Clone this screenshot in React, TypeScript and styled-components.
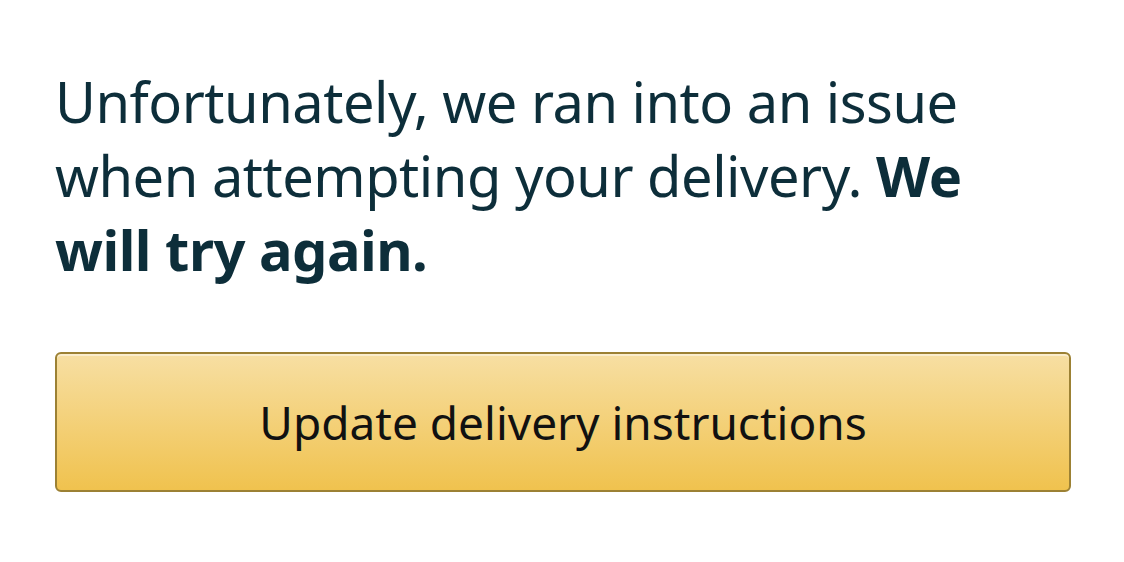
import React from "react";
import styled, { createGlobalStyle } from "styled-components";

const Global = createGlobalStyle`
  html, body { margin: 0; padding: 0; background: #ffffff; }
  body { font-family: "Noto Sans", "Open Sans", sans-serif; }
`;

const Page = styled.main`
  width: 1124px;
  height: 562px;
  box-sizing: border-box;
  padding: 64px 54px 0 55px;
  display: flex;
  flex-direction: column;
  gap: 66px;
  background: #ffffff;
`;

const Message = styled.p`
  margin: 0;
  font-size: 56px;
  line-height: 74px;
  letter-spacing: -0.5px;
  color: #0d2e3a;
  font-weight: 400;
  max-width: 960px;
`;

const Strong = styled.strong`
  font-weight: 700;
`;

const Button = styled.button`
  width: 1016px;
  height: 140px;
  box-sizing: border-box;
  border: 2px solid #9c8134;
  border-radius: 6px;
  background: linear-gradient(to bottom, #f7dfa3, #f0c24e);
  box-shadow: inset 0 2px 0 rgba(255, 255, 255, 0.45);
  font-family: "Noto Sans", "Open Sans", sans-serif;
  font-size: 46px;
  color: #111111;
  display: flex;
  align-items: center;
  justify-content: center;
  padding: 0;
`;

export default function App() {
  return (
    <>
      <Global />
      <Page>
        <Message>
          Unfortunately, we ran into an issue when attempting your delivery.{" "}
          <Strong>We will try again.</Strong>
        </Message>
        <Button>Update delivery instructions</Button>
      </Page>
    </>
  );
}
